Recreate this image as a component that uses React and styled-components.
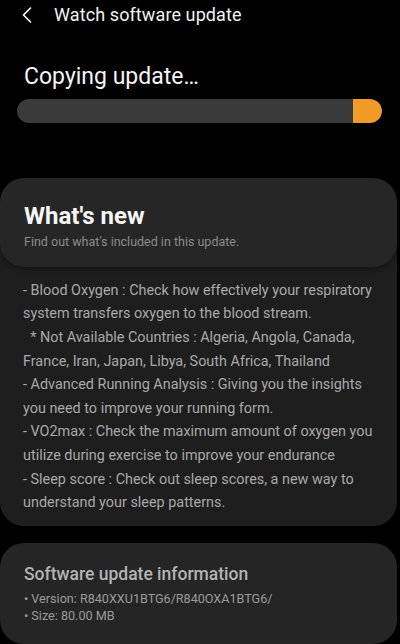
import React from "react";
import styled, { createGlobalStyle } from "styled-components";

const GlobalStyle = createGlobalStyle`
  html, body {
    margin: 0;
    padding: 0;
    background: #000000;
  }
  body {
    font-family: Roboto, "Liberation Sans", sans-serif;
    -webkit-font-smoothing: antialiased;
  }
`;

const Screen = styled.div`
  width: 400px;
  height: 644px;
  overflow: hidden;
  background: #000000;
  display: flex;
  flex-direction: column;
`;

const TopBar = styled.header`
  display: flex;
  align-items: center;
  height: 30px;
  padding-left: 22px;
  gap: 18px;
`;

const BackButton = styled.button`
  background: none;
  border: none;
  padding: 0;
  width: 14px;
  height: 18px;
  display: flex;
  align-items: center;
  color: #ffffff;
`;

const Title = styled.h1`
  margin: 0;
  font-size: 18px;
  font-weight: 400;
  color: #f2f2f2;
  letter-spacing: 0.1px;
`;

const Progress = styled.section`
  padding: 33px 18px 0 17px;
`;

const Status = styled.h2`
  margin: 0 0 8px 7px;
  font-size: 23px;
  font-weight: 400;
  color: #f4f4f4;
  line-height: 28px;
`;

const Track = styled.div`
  height: 24px;
  border-radius: 12px;
  background: #3a3a3a;
  overflow: hidden;
  display: flex;
  justify-content: flex-end;
`;

const Fill = styled.div`
  height: 100%;
  background: #f19a28;
  border-radius: 0 12px 12px 0;
`;

const Card = styled.section`
  margin: ${(p) => p.$top}px 3px 0 0;
  background: ${(p) => p.$bg};
  border-radius: 24px;
  overflow: hidden;
`;

const CardHead = styled.div`
  background: #262626;
  border-radius: 24px;
  padding: 23px 24px 17px;
  box-shadow: 0 2px 4px rgba(0, 0, 0, 0.35);
`;

const HeadTitle = styled.h3`
  margin: 0;
  font-size: 24px;
  font-weight: 700;
  color: #f6f6f6;
  line-height: 30px;
`;

const HeadSub = styled.p`
  margin: 3px 0 0;
  font-size: 12.5px;
  color: #8c8c8c;
  line-height: 16px;
`;

const Notes = styled.div`
  padding: 12px 20px 14px 23px;
  font-size: 14.4px;
  line-height: 23.6px;
  color: #a9a9a9;
  white-space: pre-line;
`;

const InfoBody = styled.div`
  padding: 20px 24px 21px;
`;

const InfoTitle = styled.h3`
  margin: 0 0 5px;
  font-size: 17.5px;
  font-weight: 500;
  color: #b4b4b4;
  line-height: 22px;
`;

const InfoLine = styled.div`
  font-size: 12.6px;
  line-height: 17px;
  color: #9b9b9b;
`;

const notes = `- Blood Oxygen : Check how effectively your respiratory
system transfers oxygen to the blood stream.
\u00a0\u00a0* Not Available Countries : Algeria, Angola, Canada,
France, Iran, Japan, Libya, South Africa, Thailand
- Advanced Running Analysis : Giving you the insights
you need to improve your running form.
- VO2max : Check the maximum amount of oxygen you
utilize during exercise to improve your endurance
- Sleep score : Check out sleep scores, a new way to
understand your sleep patterns.`;

const App = () => {
  const percent = 92;

  return (
    <Screen>
      <GlobalStyle />
      <TopBar>
        <BackButton aria-label="Back">
          <svg width="10" height="16" viewBox="0 0 10 16">
            <path
              d="M8.5 1 L1.5 8 L8.5 15"
              fill="none"
              stroke="#ffffff"
              strokeWidth="1.6"
              strokeLinecap="round"
              strokeLinejoin="round"
            />
          </svg>
        </BackButton>
        <Title>Watch software update</Title>
      </TopBar>

      <Progress>
        <Status>Copying update…</Status>
        <Track>
          <Fill style={{ width: `${100 - percent}%` }} />
        </Track>
      </Progress>

      <Card $top={55} $bg="#1e1e1e">
        <CardHead>
          <HeadTitle>What's new</HeadTitle>
          <HeadSub>Find out what's included in this update.</HeadSub>
        </CardHead>
        <Notes>{notes}</Notes>
      </Card>

      <Card $top={17} $bg="#252525">
        <InfoBody>
          <InfoTitle>Software update information</InfoTitle>
          <InfoLine>• Version: R840XXU1BTG6/R840OXA1BTG6/</InfoLine>
          <InfoLine>• Size: 80.00 MB</InfoLine>
        </InfoBody>
      </Card>
    </Screen>
  );
};

export default App;
